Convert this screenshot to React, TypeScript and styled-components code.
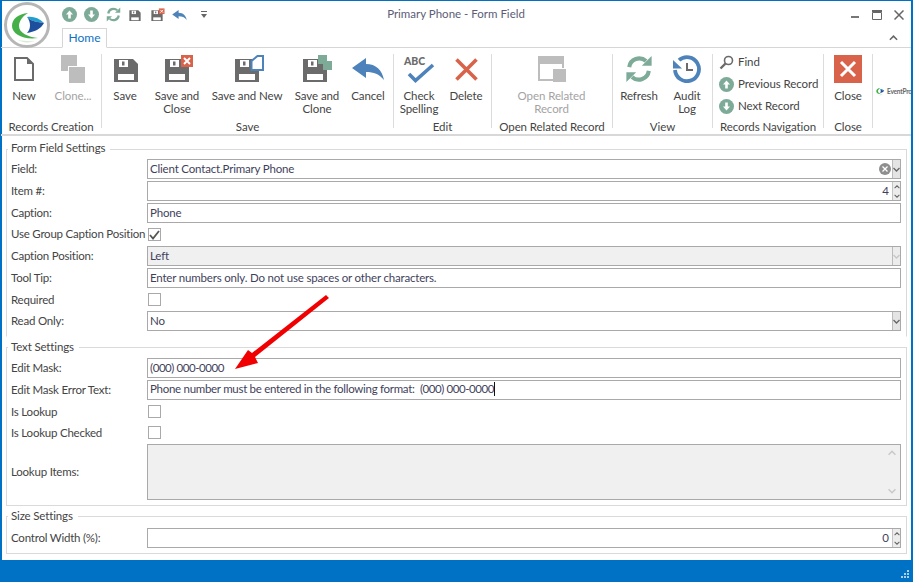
import React from "react";
import styled, { createGlobalStyle } from "styled-components";

const GRAY = "#6b6b6b";
const GREEN = "#7dab98";
const BLUE = "#4d83ba";
const RED = "#d9634a";
const FONT = `"Lato", "Open Sans", sans-serif`;

const Global = createGlobalStyle`
  html, body { margin: 0; padding: 0; background: #fff; }
  body { font-family: ${FONT}; font-size: 11.5px; color: #444; overflow: hidden; }
  * { box-sizing: border-box; }
`;

const Windowed = styled.div`
  position: relative;
  width: 913px;
  height: 582px;
  display: flex;
  flex-direction: column;
  border-style: solid;
  border-color: #0072c6;
  border-width: 1px 2px 0 1px;
  background: #fff;
  box-shadow: inset 1px 0 #0072c6;
  overflow: hidden;
`;

const TitleBar = styled.header`
  height: 27px;
  flex: none;
  display: grid;
  grid-template-columns: 1fr auto 1fr;
  align-items: center;
`;
const Quick = styled.div`
  display: flex;
  align-items: center;
  padding-left: 60px;
  gap: 6px;
`;
const QuickSlot = styled.span`
  width: 16px;
  height: 16px;
  display: flex;
  align-items: center;
  justify-content: center;
`;
const Title = styled.div`
  color: #5c5c78;
  font-size: 11.5px;
  margin-bottom: 2px;
`;
const WinButtons = styled.div`
  display: flex;
  justify-content: flex-end;
  align-items: center;
  gap: 12px;
  padding-right: 7px;
`;
const LogoWrap = styled.div`
  position: absolute;
  left: 2px;
  top: 0;
  width: 48px;
  height: 48px;
  z-index: 3;
`;

const TabRow = styled.div`
  height: 20px;
  flex: none;
  display: flex;
  align-items: flex-end;
  justify-content: space-between;
  padding-left: 61px;
  border-bottom: 1px solid #d6d6d6;
`;
const Tab = styled.div`
  width: 45px;
  height: 20px;
  margin-bottom: -1px;
  border: 1px solid #d6d6d6;
  border-bottom: 1px solid #fff;
  background: #fff;
  color: #0f72c4;
  text-align: center;
  font-size: 12px;
  line-height: 18px;
`;
const Collapse = styled.span`
  width: 14px;
  height: 14px;
  margin: 0 11px 2px 0;
  display: flex;
  align-items: center;
  justify-content: center;
`;

const Ribbon = styled.nav`
  flex: none;
  height: 88px;
  display: flex;
  padding-top: 6px;
  border-bottom: 2px solid #d8d8d8;
  letter-spacing: -0.08px;
`;
const RibbonGroup = styled.section<{ $w: number; $plain?: boolean }>`
  width: ${(p) => p.$w}px;
  height: 74px;
  flex: none;
  display: flex;
  flex-direction: column;
  border-right: ${(p) => (p.$plain ? "none" : "1px solid #dcdcdc")};
`;
const GroupItems = styled.div`
  flex: 1;
  display: flex;
  min-height: 0;
`;
const GroupLabel = styled.div`
  height: 14px;
  margin-bottom: -6px;
  line-height: 14px;
  text-align: center;
  color: #444;
  white-space: nowrap;
`;
const BigButton = styled.div<{ $w: number; $off?: boolean }>`
  width: ${(p) => p.$w}px;
  flex: none;
  display: flex;
  flex-direction: column;
  align-items: center;
  color: ${(p) => (p.$off ? "#a3a3a3" : "#444")};
  line-height: 13px;
  text-align: center;
  white-space: nowrap;
`;
const IconBox = styled.div`
  width: 34px;
  height: 30px;
  margin-bottom: 5px;
  display: flex;
  align-items: center;
  justify-content: center;
`;
const SmallList = styled.div`
  display: flex;
  flex-direction: column;
  gap: 6px;
  padding: 0 0 0 6px;
`;
const SmallButton = styled.div`
  height: 16px;
  display: flex;
  align-items: center;
  gap: 4px;
  color: #444;
  white-space: nowrap;
`;
const SmallText = styled.span`
  margin-bottom: 2px;
`;
const BrandTile = styled.div`
  width: 40px;
  height: 74px;
  display: flex;
  align-items: center;
  gap: 1px;
  padding: 0 0 0 1px;
  overflow: hidden;
  white-space: nowrap;
`;
const BrandText = styled.span`
  font-size: 6.5px;
  font-weight: 700;
  letter-spacing: -0.2px;
  color: #666;
`;

const Form = styled.main`
  flex: 1;
  min-height: 0;
  padding-top: 5px;
  padding-left: 5px;
  padding-right: 4px;
  display: flex;
  flex-direction: column;
  gap: 2px;
`;
const Group = styled.fieldset<{ $top: number; $open?: boolean }>`
  margin: 0;
  min-width: 0;
  border: 1px solid #dadada;
  border-bottom-color: ${(p) => (p.$open ? "transparent" : "#dadada")};
  padding: ${(p) => p.$top}px 5px 5px 4px;
  display: flex;
  flex-direction: column;
  gap: 2px;
`;
const Legend = styled.legend<{ $lh?: number }>`
  margin-left: -3px;
  padding: 0 5px 0 3px;
  height: 16px;
  line-height: ${(p) => p.$lh ?? 14}px;
  letter-spacing: -0.15px;
  color: #444;
`;
const Row = styled.div<{ $h?: number }>`
  height: ${(p) => p.$h ?? 20}px;
  display: grid;
  grid-template-columns: 136px 1fr;
  align-items: center;
`;
const Label = styled.label<{ $low?: boolean }>`
  color: #444;
  white-space: nowrap;
  letter-spacing: -0.22px;
  margin-bottom: ${(p) => (p.$low ? 0 : 2)}px;
`;
const Field = styled.div<{ $off?: boolean; $right?: boolean; $h?: number }>`
  height: ${(p) => p.$h ?? 20}px;
  display: flex;
  align-items: center;
  justify-content: ${(p) => (p.$right ? "flex-end" : "flex-start")};
  border: 1px solid #a9a9a9;
  background: ${(p) => (p.$off ? "#f0f0f0" : "#fff")};
  color: #3f3f5c;
  padding-left: 2px;
  white-space: pre;
`;
const FieldText = styled.span<{ $ls?: number }>`
  flex: 1;
  min-width: 0;
  margin-bottom: 2px;
  letter-spacing: ${(p) => p.$ls ?? -0.18}px;
`;
const Digits = styled.span`
  letter-spacing: -0.43px;
`;
const NumberText = styled.span`
  padding-right: 3px;
  margin-bottom: 2px;
`;
const Caret = styled.span`
  display: inline-block;
  width: 1px;
  height: 14px;
  background: #111;
  vertical-align: -3px;
`;
const ComboButton = styled.span<{ $off?: boolean }>`
  width: 8px;
  height: 18px;
  flex: none;
  display: flex;
  align-items: center;
  justify-content: center;
  background: ${(p) => (p.$off ? "#ececec" : "#e4e4e4")};
  border-left: 1px solid #bbb;
`;
const SpinButton = styled.span`
  width: 8px;
  height: 18px;
  flex: none;
  display: flex;
  flex-direction: column;
  align-items: center;
  justify-content: space-around;
  background: #ececec;
  border-left: 1px solid #c4c4c4;
`;
const ClearIcon = styled.span`
  width: 12px;
  height: 12px;
  margin-right: 1px;
  display: flex;
`;
const Check = styled.span`
  width: 13px;
  height: 13px;
  margin-left: 1px;
  border: 1px solid #a9a9a9;
  background: #fff;
  display: flex;
  align-items: center;
  justify-content: center;
`;
const MemoScroll = styled.span`
  width: 17px;
  height: 100%;
  margin-left: auto;
  display: flex;
  flex-direction: column;
  justify-content: space-between;
  align-items: center;
  padding: 5px 0;
`;
const StatusBar = styled.footer`
  height: 22px;
  flex: none;
  margin: 0 -2px 0 -1px;
  background: #0072c6;
  display: flex;
  justify-content: flex-end;
  align-items: flex-end;
  padding: 0 3px 3px 0;
`;
const ArrowLayer = styled.svg`
  position: absolute;
  left: 229px;
  top: 291px;
  z-index: 4;
`;

const Chevron = ({ up, color = "#666", w = 7, h = 5 }: { up?: boolean; color?: string; w?: number; h?: number }) => (
  <svg width={w} height={h} viewBox="0 0 7 5">
    <polyline points={up ? "0.5,4 3.5,1 6.5,4" : "0.5,1 3.5,4 6.5,1"} fill="none" stroke={color} strokeWidth="1.3" />
  </svg>
);

const CircleArrow = ({ down, size = 15 }: { down?: boolean; size?: number }) => (
  <svg width={size} height={size} viewBox="0 0 15 15">
    <circle cx="7.5" cy="7.5" r="7.5" fill={GREEN} />
    <path
      d={down ? "M6.2 3.5h2.6v4h2.2l-3.5 4-3.5-4h2.2z" : "M6.2 11.5h2.6v-4h2.2l-3.5-4-3.5 4h2.2z"}
      fill="#fff"
    />
  </svg>
);

const Arcs = ({ size, color }: { size: number; color: string }) => (
  <svg width={size} height={size} viewBox="0 0 30 30">
    <path d="M4.5 13A10.8 10.8 0 0 1 22.5 6.5" fill="none" stroke={color} strokeWidth="4.4" />
    <path d="M18 11.5h10.5V1z" fill={color} />
    <path d="M25.5 17A10.8 10.8 0 0 1 7.5 23.5" fill="none" stroke={color} strokeWidth="4.4" />
    <path d="M12 18.5H1.5V29z" fill={color} />
  </svg>
);

/* The disk occupies 24x23 at (x, 4) of a 34x28 box, so overlays can sit beside it. */
const Disk = ({ x = 5, w = 34, children }: { x?: number; w?: number; children?: React.ReactNode }) => (
  <svg width={w} height={(w * 28) / 34} viewBox="0 0 34 28">
    <g transform={`translate(${x} 4)`}>
      <path d="M0 0H19L24 5V23H0Z" fill={GRAY} />
      <rect x="5" y="1" width="9" height="7" fill="#fff" />
      <rect x="8" y="2.5" width="2.5" height="4" fill={GRAY} />
      <rect x="4" y="15" width="16" height="6" fill="#fff" />
    </g>
    {children}
  </svg>
);

const RedBadge = () => (
  <>
    <rect x="21" y="0" width="12" height="12" fill={RED} />
    <path d="M24 3l6 6M30 3l-6 6" stroke="#fff" strokeWidth="1.9" />
  </>
);

const BackArrow = ({ w = 32, h = 22 }: { w?: number; h?: number }) => (
  <svg width={w} height={h} viewBox="0 0 32 22">
    <path d="M0 10L14 0V6C24 6 30 12 32 22C27 16 22 14 14 14V20Z" fill={BLUE} />
  </svg>
);

const NewDoc = () => (
  <svg width="20" height="24" viewBox="0 0 20 24">
    <path d="M1 1H13L19 7V23H1Z" fill="#fff" stroke={GRAY} strokeWidth="2" />
    <path d="M13 1V7H19Z" fill={GRAY} />
  </svg>
);

const CloneIcon = () => (
  <svg width="24" height="28" viewBox="0 0 24 28">
    <path d="M0 0H16V11H7V16H0Z" fill="#bdbdbd" />
    <rect x="8" y="12" width="16" height="16" fill="#bdbdbd" />
  </svg>
);

const SpellIcon = () => (
  <svg width="32" height="29" viewBox="0 0 32 29">
    <text x="1" y="10" fontFamily={FONT} fontWeight="900" fontSize="10.5" fill={GRAY}>ABC</text>
    <path d="M6 19L12.5 25.5L30 10" fill="none" stroke={BLUE} strokeWidth="3.6" />
  </svg>
);

const CrossIcon = () => (
  <svg width="23" height="23" viewBox="0 0 23 23">
    <path d="M1.5 1.5L21.5 21.5M21.5 1.5L1.5 21.5" stroke={RED} strokeWidth="3.6" />
  </svg>
);

const RelatedIcon = () => (
  <svg width="28" height="26" viewBox="0 0 28 26">
    <path d="M0 0H26V8H0Z" fill="#bdbdbd" />
    <path d="M1 8V24H15M25 8V12" fill="none" stroke="#bdbdbd" strokeWidth="2" />
    <rect x="15" y="13" width="13" height="13" fill="#bdbdbd" />
  </svg>
);

const AuditIcon = () => (
  <svg width="28" height="28" viewBox="0 0 28 28">
    <path d="M6 5.2A12 12 0 1 1 2 15" fill="none" stroke={BLUE} strokeWidth="3.8" />
    <path d="M0 5L9 13.5H0Z" fill={BLUE} />
    <path d="M14 8V15H20" fill="none" stroke={GRAY} strokeWidth="2" />
  </svg>
);

const CloseTile = () => (
  <svg width="28" height="28" viewBox="0 0 28 28">
    <rect width="28" height="28" fill={RED} />
    <path d="M7 7L21 21M21 7L7 21" stroke="#fff" strokeWidth="3" />
  </svg>
);

const FindIcon = () => (
  <svg width="15" height="15" viewBox="0 0 15 15">
    <circle cx="9.5" cy="5.5" r="4" fill="none" stroke={GRAY} strokeWidth="1.6" />
    <path d="M6.5 8.5L1.5 13.5" stroke={GRAY} strokeWidth="2.4" />
  </svg>
);

const Logo = ({ size = 48, ring = true }: { size?: number; ring?: boolean }) => (
  <svg width={size} height={size} viewBox="0 0 48 48">
    {ring && <circle cx="24" cy="24" r="21.5" fill="#fff" stroke="#b6b6b6" strokeWidth="3" />}
    <path d="M25 12C15 13 9 18 9 25C9 33 20 39 35 37C25 36 16 32 16 25C16 20 20 15 25 12Z" fill="#45b04a" />
    <path d="M15 39C20 42 27 42 32 40C26 40.5 20 40 15 39Z" fill="#d6ebd2" />
    <path d="M24 16C30 15 36 17 41 22C35 21 29 21 24 16Z" fill="#1f9fd0" />
    <path d="M24 16C29 21 35 21 41 22C38 28 31 31 24 32C28 28 28 21 24 16Z" fill="#1d4f9c" />
  </svg>
);

const Tick = () => (
  <svg width="11" height="10" viewBox="0 0 11 10">
    <path d="M1 5L4 8.5L10 1" fill="none" stroke="#555" strokeWidth="1.8" />
  </svg>
);

const Combo = ({ off }: { off?: boolean }) => (
  <ComboButton $off={off}>
    <Chevron color={off ? "#c6c6c6" : "#666"} />
  </ComboButton>
);

const Spin = () => (
  <SpinButton>
    <Chevron up w={6} h={4} />
    <Chevron w={6} h={4} />
  </SpinButton>
);

const Big = ({ w, icon, text, off }: { w: number; icon: React.ReactNode; text: React.ReactNode; off?: boolean }) => (
  <BigButton $w={w} $off={off}>
    <IconBox>{icon}</IconBox>
    <span>{text}</span>
  </BigButton>
);

export default function App() {
  return (
    <Windowed>
      <Global />
      <LogoWrap>
        <Logo />
      </LogoWrap>
      <TitleBar>
        <Quick>
          <QuickSlot><CircleArrow /></QuickSlot>
          <QuickSlot><CircleArrow down /></QuickSlot>
          <QuickSlot><Arcs size={15} color={GREEN} /></QuickSlot>
          <QuickSlot><Disk w={17} /></QuickSlot>
          <QuickSlot><Disk w={17}><RedBadge /></Disk></QuickSlot>
          <QuickSlot><BackArrow w={15} h={10} /></QuickSlot>
          <QuickSlot>
            <svg width="16" height="10" viewBox="0 0 16 10">
              <path d="M8 1h6v1H8zM8 4h6L11 8z" fill="#666" />
            </svg>
          </QuickSlot>
        </Quick>
        <Title>Primary Phone - Form Field</Title>
        <WinButtons>
          <svg width="10" height="10" viewBox="0 0 10 10"><rect x="1" y="6" width="8" height="2" fill="#777" /></svg>
          <svg width="10" height="10" viewBox="0 0 10 10"><path d="M.5 2.5h9v7h-9z" fill="none" stroke="#666" /><rect width="10" height="2" fill="#666" /></svg>
          <svg width="10" height="10" viewBox="0 0 10 10"><path d="M.5.5l9 9M9.5.5l-9 9" stroke="#666" strokeWidth="1.5" /></svg>
        </WinButtons>
      </TitleBar>
      <TabRow>
        <Tab>Home</Tab>
        <Collapse><Chevron up w={9} h={6} /></Collapse>
      </TabRow>
      <Ribbon>
        <RibbonGroup $w={101}>
          <GroupItems>
            <Big w={46} icon={<NewDoc />} text="New" />
            <Big w={52} icon={<CloneIcon />} text="Clone..." off />
          </GroupItems>
          <GroupLabel>Records Creation</GroupLabel>
        </RibbonGroup>
        <RibbonGroup $w={292}>
          <GroupItems>
            <Big w={46} icon={<Disk x={6} />} text="Save" />
            <Big w={58} icon={<Disk><RedBadge /></Disk>} text={<>Save and<br />Close</>} />
            <Big
              w={82}
              icon={
                <Disk>
                  <path d="M24.5 3.5L27.5 1H33V15H21.5V6Z" fill="#fff" stroke={BLUE} strokeWidth="2" />
                </Disk>
              }
              text="Save and New"
            />
            <Big
              w={58}
              icon={
                <Disk x={3}>
                  <rect x="18" y="0" width="9" height="9" fill={GREEN} />
                  <rect x="23" y="6" width="9" height="9" fill={GREEN} />
                </Disk>
              }
              text={<>Save and<br />Clone</>}
            />
            <Big w={44} icon={<BackArrow />} text="Cancel" />
          </GroupItems>
          <GroupLabel>Save</GroupLabel>
        </RibbonGroup>
        <RibbonGroup $w={98}>
          <GroupItems>
            <Big w={50} icon={<SpellIcon />} text={<>Check<br />Spelling</>} />
            <Big w={44} icon={<CrossIcon />} text="Delete" />
          </GroupItems>
          <GroupLabel>Edit</GroupLabel>
        </RibbonGroup>
        <RibbonGroup $w={121}>
          <GroupItems>
            <Big w={119} icon={<RelatedIcon />} text={<>Open Related<br />Record</>} off />
          </GroupItems>
          <GroupLabel>Open Related Record</GroupLabel>
        </RibbonGroup>
        <RibbonGroup $w={100}>
          <GroupItems>
            <Big w={52} icon={<Arcs size={28} color={GREEN} />} text="Refresh" />
            <Big w={44} icon={<AuditIcon />} text={<>Audit<br />Log</>} />
          </GroupItems>
          <GroupLabel>View</GroupLabel>
        </RibbonGroup>
        <RibbonGroup $w={111}>
          <GroupItems>
            <SmallList>
              <SmallButton><FindIcon /><SmallText>Find</SmallText></SmallButton>
              <SmallButton><CircleArrow /><SmallText>Previous Record</SmallText></SmallButton>
              <SmallButton><CircleArrow down /><SmallText>Next Record</SmallText></SmallButton>
            </SmallList>
          </GroupItems>
          <GroupLabel>Records Navigation</GroupLabel>
        </RibbonGroup>
        <RibbonGroup $w={49}>
          <GroupItems>
            <Big w={48} icon={<CloseTile />} text="Close" />
          </GroupItems>
          <GroupLabel>Close</GroupLabel>
        </RibbonGroup>
        <RibbonGroup $w={40} $plain>
          <BrandTile>
            <Logo size={12} ring={false} />
            <BrandText>EventPro</BrandText>
          </BrandTile>
        </RibbonGroup>
      </Ribbon>
      <Form>
        <Group $top={2} $open>
          <Legend>Form Field Settings</Legend>
          <Row>
            <Label>Field:</Label>
            <Field>
              <FieldText>Client Contact.Primary Phone</FieldText>
              <ClearIcon>
                <svg width="12" height="12" viewBox="0 0 12 12">
                  <circle cx="6" cy="6" r="6" fill="#8e8e8e" />
                  <path d="M3.5 3.5l5 5M8.5 3.5l-5 5" stroke="#fff" strokeWidth="1.3" />
                </svg>
              </ClearIcon>
              <Combo />
            </Field>
          </Row>
          <Row>
            <Label>Item #:</Label>
            <Field $right><NumberText>4</NumberText><Spin /></Field>
          </Row>
          <Row>
            <Label>Caption:</Label>
            <Field><FieldText>Phone</FieldText></Field>
          </Row>
          <Row $h={19}>
            <Label>Use Group Caption Position</Label>
            <Check><Tick /></Check>
          </Row>
          <Row>
            <Label>Caption Position:</Label>
            <Field $off><FieldText>Left</FieldText><Combo off /></Field>
          </Row>
          <Row>
            <Label>Tool Tip:</Label>
            <Field><FieldText>Enter numbers only. Do not use spaces or other characters.</FieldText></Field>
          </Row>
          <Row $h={19}>
            <Label $low>Required</Label>
            <Check />
          </Row>
          <Row>
            <Label>Read Only:</Label>
            <Field><FieldText>No</FieldText><Combo /></Field>
          </Row>
        </Group>
        <Group $top={3}>
          <Legend $lh={16}>Text Settings</Legend>
          <Row>
            <Label>Edit Mask:</Label>
            <Field><FieldText><Digits>(000) 000-0000</Digits></FieldText></Field>
          </Row>
          <Row>
            <Label>Edit Mask Error Text:</Label>
            <Field>
              <FieldText $ls={-0.29}>Phone number must be entered in the following format:  <Digits>(000) 000-0000</Digits><Caret /></FieldText>
            </Field>
          </Row>
          <Row $h={19}>
            <Label $low>Is Lookup</Label>
            <Check />
          </Row>
          <Row $h={19}>
            <Label $low>Is Lookup Checked</Label>
            <Check />
          </Row>
          <Row $h={56}>
            <Label>Lookup Items:</Label>
            <Field $off $h={56}>
              <MemoScroll>
                <Chevron up color="#c8c8c8" w={8} h={6} />
                <Chevron color="#c8c8c8" w={8} h={6} />
              </MemoScroll>
            </Field>
          </Row>
        </Group>
        <Group $top={4}>
          <Legend $lh={16}>Size Settings</Legend>
          <Row>
            <Label>Control Width (%):</Label>
            <Field $right><NumberText>0</NumberText><Spin /></Field>
          </Row>
        </Group>
      </Form>
      <StatusBar>
        <svg width="9" height="9" viewBox="0 0 9 9" fill="#a9cfe9">
          <rect x="6" y="0" width="2" height="2" />
          <rect x="3" y="3" width="2" height="2" />
          <rect x="6" y="3" width="2" height="2" />
          <rect x="0" y="6" width="2" height="2" />
          <rect x="3" y="6" width="2" height="2" />
          <rect x="6" y="6" width="2" height="2" />
        </svg>
      </StatusBar>
      <ArrowLayer width="104" height="84" viewBox="0 0 104 84">
        <path d="M5 77L18 58L22 61L96 3L99 6L25 65L28 71Z" fill="#f00000" />
      </ArrowLayer>
    </Windowed>
  );
}
